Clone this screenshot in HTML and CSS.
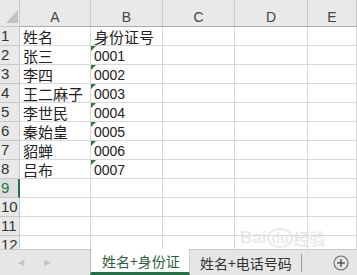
FILE: index.html
```html
<!DOCTYPE html>
<html lang="zh">
<head>
<meta charset="utf-8">
<link rel="stylesheet" href="styles.css">
</head>
<body>
<div class="app">
  <div class="sheet">
    <div class="grid">
      <div class="hd corner"><span class="tri"></span></div>
      <div class="hd col">A</div>
      <div class="hd col">B</div>
      <div class="hd col">C</div>
      <div class="hd col">D</div>
      <div class="hd col">E</div>

      <div class="hd row">1</div><div class="c">姓名</div><div class="c">身份证号</div><div class="c"></div><div class="c"></div><div class="c"></div>
      <div class="hd row">2</div><div class="c">张三</div><div class="c num">0001</div><div class="c"></div><div class="c"></div><div class="c"></div>
      <div class="hd row">3</div><div class="c">李四</div><div class="c num">0002</div><div class="c"></div><div class="c"></div><div class="c"></div>
      <div class="hd row">4</div><div class="c">王二麻子</div><div class="c num">0003</div><div class="c"></div><div class="c"></div><div class="c"></div>
      <div class="hd row">5</div><div class="c">李世民</div><div class="c num">0004</div><div class="c"></div><div class="c"></div><div class="c"></div>
      <div class="hd row">6</div><div class="c">秦始皇</div><div class="c num">0005</div><div class="c"></div><div class="c"></div><div class="c"></div>
      <div class="hd row">7</div><div class="c">貂蝉</div><div class="c num">0006</div><div class="c"></div><div class="c"></div><div class="c"></div>
      <div class="hd row">8</div><div class="c">吕布</div><div class="c num">0007</div><div class="c"></div><div class="c"></div><div class="c"></div>
      <div class="hd row sel">9</div><div class="c"></div><div class="c"></div><div class="c"></div><div class="c"></div><div class="c"></div>
      <div class="hd row">10</div><div class="c"></div><div class="c"></div><div class="c"></div><div class="c"></div><div class="c"></div>
      <div class="hd row">11</div><div class="c"></div><div class="c"></div><div class="c"></div><div class="c"></div><div class="c"></div>
      <div class="hd row">12</div><div class="c"></div><div class="c"></div><div class="c"></div><div class="c"></div><div class="c"></div>
    </div>
    <div class="watermark"><span class="wm-bai">Bai</span><span class="wm-du">du</span><span class="wm-jy">经验</span></div>
  </div>
  <div class="tabs">
    <div class="nav">
      <span class="arrow">&#9664;</span>
      <span class="arrow">&#9654;</span>
    </div>
    <div class="tab active">姓名+身份证</div>
    <div class="tab second">姓名+电话号码</div>
    <div class="add">
      <svg width="16" height="16" viewBox="0 0 16 16">
        <circle cx="8" cy="8" r="7" fill="none" stroke="#666" stroke-width="1.1"/>
        <path d="M8 4.2V11.8M4.2 8H11.8" stroke="#555" stroke-width="1.5"/>
      </svg>
    </div>
  </div>
</div>
</body>
</html>
```

FILE: styles.css
```css
html, body {
  margin: 0;
  padding: 0;
  background: #fff;
}
.app {
  width: 357px;
  height: 275px;
  overflow: hidden;
  display: flex;
  flex-direction: column;
  font-family: "Noto Sans CJK SC", "Liberation Sans", sans-serif;
  color: #222;
}
.sheet {
  position: relative;
  height: 249px;
  overflow: hidden;
  flex: none;
}
.grid {
  display: grid;
  grid-template-columns: 20px 71px 72px 72px 73px 49px;
  grid-template-rows: 27px;
  grid-auto-rows: 19px;
}
.grid > div {
  box-sizing: border-box;
  border-right: 1px solid #d9d9d9;
  border-bottom: 1px solid #d9d9d9;
  overflow: hidden;
  white-space: nowrap;
}
.hd {
  background: #e9e9e9;
  color: #333;
}
.grid > .hd {
  border-color: #c8c8c8;
}
.corner {
  position: relative;
}
.tri {
  position: absolute;
  left: 6px;
  top: 10px;
  width: 0;
  height: 0;
  border-left: 12px solid transparent;
  border-bottom: 13px solid #c2c2c2;
}
.col {
  display: flex;
  align-items: flex-end;
  justify-content: center;
  font-family: "Liberation Sans", sans-serif;
  font-size: 14px;
  line-height: 14px;
  padding-bottom: 2px;
  color: #444;
}
.grid > .col {
  border-bottom-color: #ababab;
}
.row {
  font-family: "Liberation Sans", sans-serif;
  font-size: 15px;
  line-height: 18px;
  padding-left: 1px;
  color: #333;
}
.grid > .sel {
  color: #217346;
  border-right: 2px solid #217346;
  background: #dedede;
}
.c {
  font-size: 15px;
  line-height: 20px;
  padding-left: 3px;
  color: #222;
}
.num {
  position: relative;
  font-family: "Liberation Sans", sans-serif;
  font-size: 14px;
  line-height: 21px;
  padding-left: 3px;
}
.num::before {
  content: "";
  position: absolute;
  left: 0;
  top: 0;
  width: 0;
  height: 0;
  border-top: 5px solid #2b7a3a;
  border-right: 5px solid transparent;
}
.watermark {
  position: absolute;
  left: 240px;
  top: 226px;
  font-family: "Liberation Sans", sans-serif;
  font-size: 17px;
  font-weight: bold;
  color: rgba(215, 215, 215, 0.55);
  display: flex;
  align-items: center;
  gap: 1px;
}
.wm-du {
  border: 2px solid rgba(215, 215, 215, 0.55);
  border-radius: 50%;
  padding: 0 2px;
  font-size: 14px;
  line-height: 16px;
}
.wm-jy {
  font-family: "Noto Sans CJK SC", sans-serif;
  font-size: 16px;
}
.tabs {
  flex: 1;
  display: flex;
  align-items: stretch;
  background: #e6e6e6;
  border-top: 1px solid #c8c8c8;
  box-sizing: border-box;
}
.nav {
  width: 90px;
  display: flex;
  align-items: center;
  gap: 20px;
  padding-left: 18px;
  box-sizing: border-box;
}
.arrow {
  font-size: 8px;
  color: #c4c4c4;
  font-family: "DejaVu Sans", sans-serif;
}
.tab {
  display: flex;
  align-items: center;
  font-size: 14px;
  box-sizing: border-box;
}
.active {
  width: 100px;
  background: #fff;
  margin-top: -1px;
  border-left: 1px solid #b5b5b5;
  border-right: 1px solid #d0d0d0;
  border-bottom: 3px solid #217346;
  padding-left: 11px;
  padding-top: 1px;
  color: #2d5f3d;
}
.second {
  width: 112px;
  padding-left: 10px;
  color: #333;
  position: relative;
}
.second::after {
  content: "";
  position: absolute;
  right: 0;
  top: 4px;
  bottom: 3px;
  width: 1px;
  background: #9a9a9a;
}
.add {
  flex: 1;
  display: flex;
  align-items: center;
  justify-content: flex-end;
  padding-right: 8px;
}
```
